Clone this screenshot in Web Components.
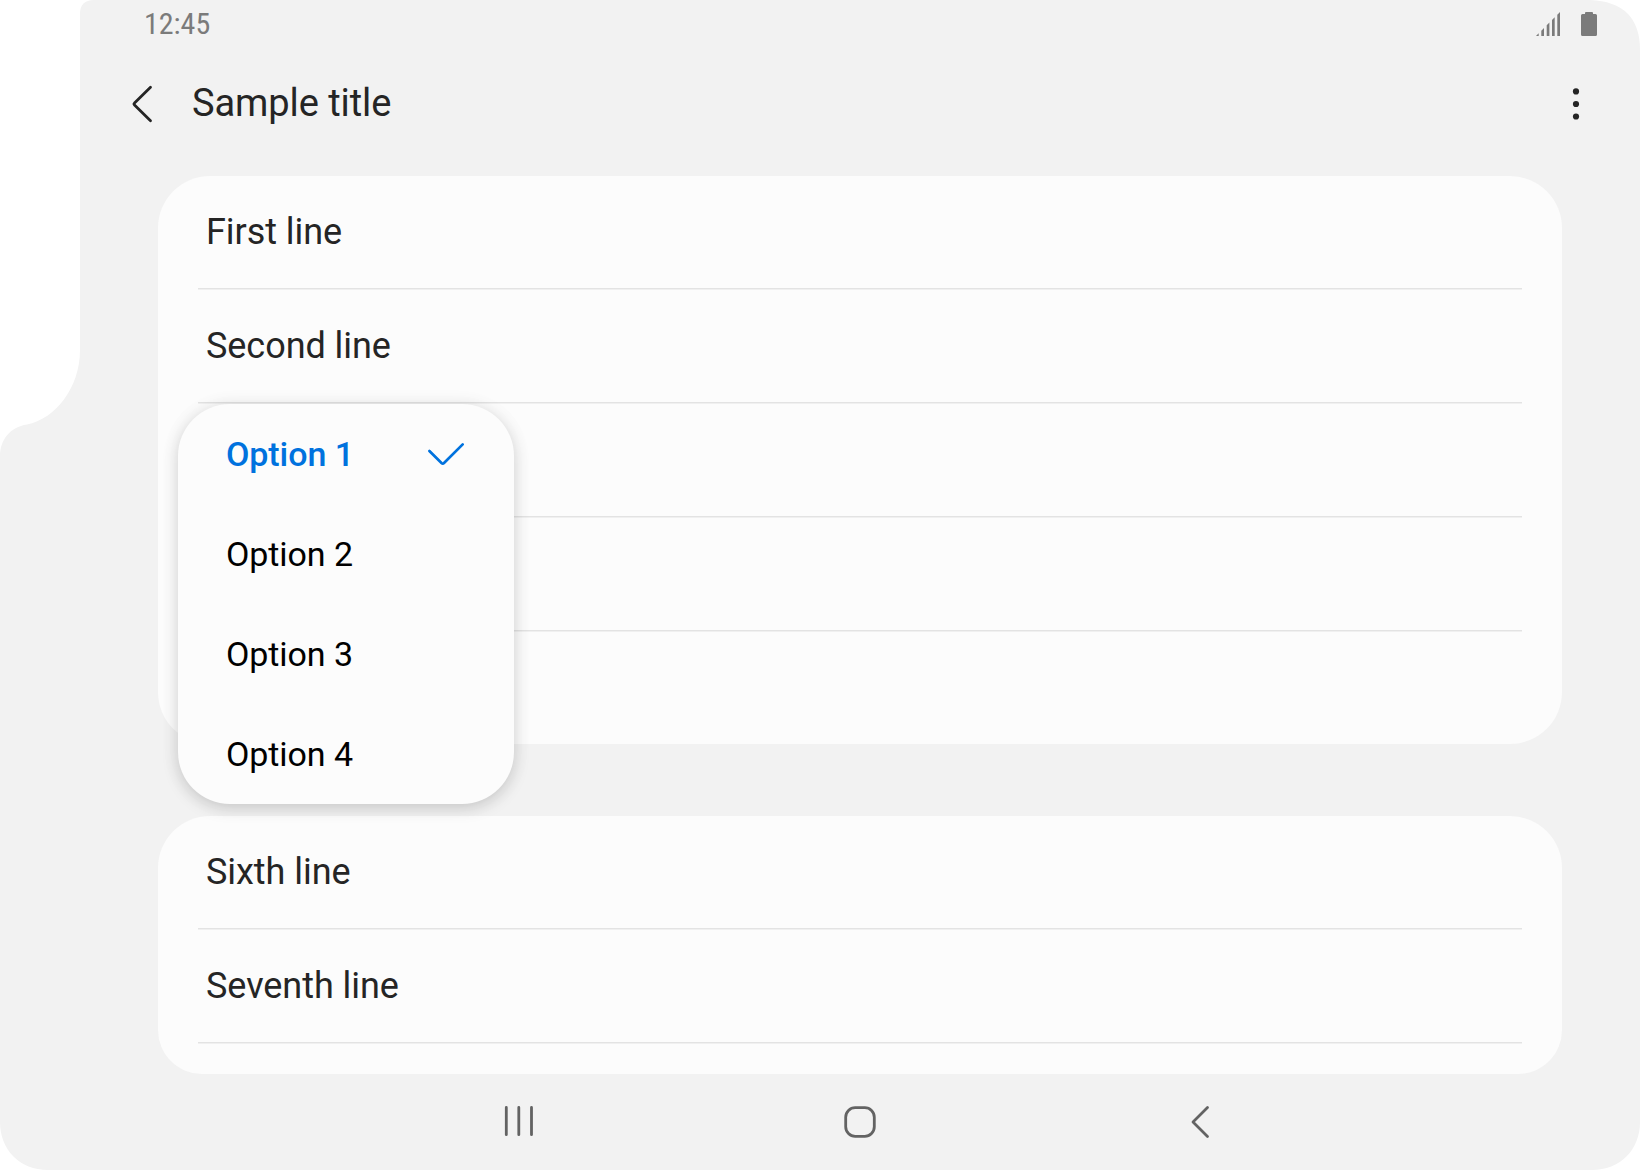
<!DOCTYPE html>
<html lang="en">
<head>
<meta charset="utf-8">
<title>Sample title</title>
<style>
  html, body { margin: 0; background: #fff; }
  body { font-family: Roboto, "Noto Sans", sans-serif; color: #252525; width: 1640px; height: 1170px; overflow: hidden; }
</style>
</head>
<body>
<fold-screen>
  <status-bar slot="status" time="12:45"></status-bar>
  <app-bar slot="header">Sample title</app-bar>
  <list-card>
    <list-row>First line</list-row>
    <list-row>Second line</list-row>
    <list-row></list-row>
    <list-row></list-row>
    <list-row last></list-row>
  </list-card>
  <list-card clipped>
    <list-row>Sixth line</list-row>
    <list-row>Seventh line</list-row>
  </list-card>
  <option-menu slot="popup">
    <option-item selected>Option 1</option-item>
    <option-item>Option 2</option-item>
    <option-item>Option 3</option-item>
    <option-item>Option 4</option-item>
  </option-menu>
  <nav-bar slot="nav"></nav-bar>
</fold-screen>
<script>
const define = (name, html) => customElements.define(name, class extends HTMLElement {
  constructor() {
    super();
    this.attachShadow({ mode: 'open' }).innerHTML = html;
  }
  connectedCallback() {
    const time = this.shadowRoot.querySelector('[data-time]');
    if (time) time.textContent = this.getAttribute('time');
  }
});

define('fold-screen', `
  <style>
    :host { display: flex; flex-direction: column; position: relative; width: 1640px; height: 1170px; background: #f2f2f2;
      clip-path: path('M94 0H1590Q1640 2 1640 50V1122C1640 1150 1620 1170 1592 1170H48C20 1170 0 1150 0 1122V456C0 440 10 427 27 424.500C55 419 80 388 80 350V14Q80 0 94 0Z'); }
    main { display: flex; flex-direction: column; gap: 72px; margin: 0 78px 0 158px; height: 898px; }
  </style>
  <slot name="status"></slot>
  <slot name="header"></slot>
  <main><slot></slot></main>
  <slot name="nav"></slot>
  <slot name="popup"></slot>`);

define('status-bar', `
  <style>
    :host { display: flex; justify-content: space-between; align-items: center; height: 48px; box-sizing: border-box; padding: 0 42px 0 144px; color: #7b7b7b; }
    span { display: block; font-family: "Roboto Condensed", Roboto, sans-serif; font-size: 30px; line-height: 48px; }
    svg { display: block; }
  </style>
  <span data-time></span>
  <svg width="64" height="28" viewBox="0 0 64 28" fill="#7b7b7b">
    <path d="M2 26L4.700 23.300V26ZM7.300 26V20.700L10 18V26ZM12.700 26V15.300L15.400 12.600V26ZM18 26V10L20.700 7.300V26ZM23.300 26V4.700L26 2V26Z"/>
    <path d="M48.500 4H51V3Q51 2 52 2H58Q59 2 59 3V4H61.500Q63 4 63 5.500V24.500Q63 26 61.500 26H48.500Q47 26 47 24.500V5.500Q47 4 48.500 4Z"/>
  </svg>`);

define('app-bar', `
  <style>
    :host { display: flex; align-items: center; height: 128px; box-sizing: border-box; padding: 0 52px 16px 124px; font-size: 38px; }
    svg { display: block; }
    h1 { font: inherit; line-height: 46px; letter-spacing: -.08px; margin: 0 auto 0 36px; padding-bottom: 2px; }
  </style>
  <svg width="32" height="48" viewBox="0 0 32 48" fill="none" stroke="#252525" stroke-width="2.800" stroke-linecap="round" stroke-linejoin="round"><path d="M26.500 7.300L10.500 23Q9.400 24 10.500 25L26.500 40.700"/></svg>
  <h1><slot></slot></h1>
  <svg width="24" height="48" viewBox="0 0 24 48" fill="#252525"><circle cx="12" cy="11.400" r="3.100"/><circle cx="12" cy="24" r="3.100"/><circle cx="12" cy="36.500" r="3.100"/></svg>`);

define('list-card', `
  <style>
    :host { display: flex; flex-direction: column; height: 568px; flex: none; background: #fcfcfc; border-radius: 52px; }
    :host([clipped]) { height: 258px; border-radius: 52px 52px 44px 44px; }
  </style>
  <slot></slot>`);

define('list-row', `
  <style>
    :host { display: flex; flex-direction: column; height: 114px; font-size: 36px; padding: 0 40px; letter-spacing: -.05px; }
    div { height: 112px; line-height: 112px; padding-left: 8px; }
    hr { margin: 0; border: 0; height: 1px; background: #e3e3e3; border-bottom: 1px solid #f0f0f0; }
    :host([last]) { height: 112px; }
    :host([last]) hr { display: none; }
  </style>
  <div><slot></slot></div><hr>`);

define('option-menu', `
  <style>
    :host { display: flex; flex-direction: column; position: absolute; left: 178px; top: 404px; width: 336px; height: 400px; background: #fcfcfc; border-radius: 52px;
      box-shadow: 0 4px 16px rgba(0,0,0,.17), 0 0 24px rgba(0,0,0,.03); }
  </style>
  <slot></slot>`);

define('option-item', `
  <style>
    :host { display: flex; align-items: center; justify-content: space-between; height: 100px; padding: 0 48px; color: #000; font-size: 34px; letter-spacing: -.08px; }
    :host([selected]) { color: #0072de; font-weight: 500; }
    svg { display: none; }
    :host([selected]) svg { display: block; }
  </style>
  <span><slot></slot></span>
  <svg width="40" height="32" viewBox="0 0 40 32" fill="none" stroke="#0072de" stroke-width="2.700" stroke-linecap="round" stroke-linejoin="round"><path d="M3.400 13L15.500 25Q16.800 26.200 18 25L36.700 6.400"/></svg>`);

define('nav-bar', `
  <style>
    :host { display: flex; justify-content: center; gap: 293px; padding: 24px 0 0 78px; height: 96px; box-sizing: border-box; }
    svg { display: block; }
  </style>
  <svg width="48" height="48" viewBox="-1 0 48 48" fill="none" stroke="#636363" stroke-width="2.800" stroke-linecap="round"><path d="M11.300 9.500V36.700M23.800 9.500V36.700M36.500 9.500V36.700"/></svg>
  <svg width="48" height="48" viewBox="-1 0 48 48" fill="none" stroke="#636363" stroke-width="2.800"><rect x="9.700" y="9.700" width="28.600" height="28.600" rx="9.500"/></svg>
  <svg width="48" height="48" viewBox="0 0 48 48" fill="none" stroke="#636363" stroke-width="2.800" stroke-linecap="round" stroke-linejoin="round"><path d="M31.500 9.500L17 24L31.500 38.500"/></svg>`);
</script>
</body>
</html>
